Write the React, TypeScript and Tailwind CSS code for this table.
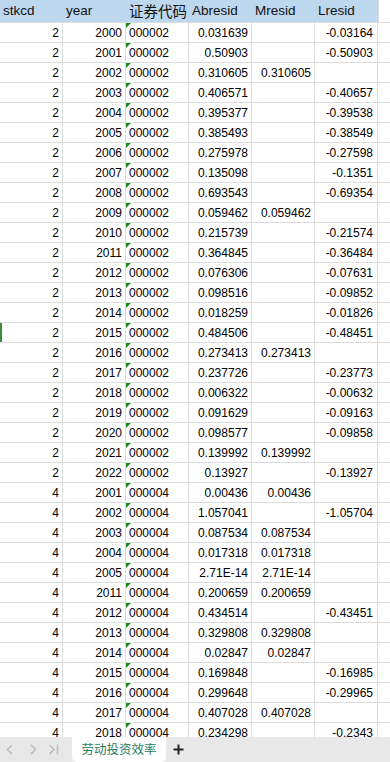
import React from "react";

type Row = {
  stkcd: number;
  year: number;
  code: string;
  ab: string;
  m: string;
  l: string;
};

const raw: [number, number, string, string, string][] = [
  [2, 2000, "0.031639", "", "-0.03164"],
  [2, 2001, "0.50903", "", "-0.50903"],
  [2, 2002, "0.310605", "0.310605", ""],
  [2, 2003, "0.406571", "", "-0.40657"],
  [2, 2004, "0.395377", "", "-0.39538"],
  [2, 2005, "0.385493", "", "-0.38549"],
  [2, 2006, "0.275978", "", "-0.27598"],
  [2, 2007, "0.135098", "", "-0.1351"],
  [2, 2008, "0.693543", "", "-0.69354"],
  [2, 2009, "0.059462", "0.059462", ""],
  [2, 2010, "0.215739", "", "-0.21574"],
  [2, 2011, "0.364845", "", "-0.36484"],
  [2, 2012, "0.076306", "", "-0.07631"],
  [2, 2013, "0.098516", "", "-0.09852"],
  [2, 2014, "0.018259", "", "-0.01826"],
  [2, 2015, "0.484506", "", "-0.48451"],
  [2, 2016, "0.273413", "0.273413", ""],
  [2, 2017, "0.237726", "", "-0.23773"],
  [2, 2018, "0.006322", "", "-0.00632"],
  [2, 2019, "0.091629", "", "-0.09163"],
  [2, 2020, "0.098577", "", "-0.09858"],
  [2, 2021, "0.139992", "0.139992", ""],
  [2, 2022, "0.13927", "", "-0.13927"],
  [4, 2001, "0.00436", "0.00436", ""],
  [4, 2002, "1.057041", "", "-1.05704"],
  [4, 2003, "0.087534", "0.087534", ""],
  [4, 2004, "0.017318", "0.017318", ""],
  [4, 2005, "2.71E-14", "2.71E-14", ""],
  [4, 2011, "0.200659", "0.200659", ""],
  [4, 2012, "0.434514", "", "-0.43451"],
  [4, 2013, "0.329808", "0.329808", ""],
  [4, 2014, "0.02847", "0.02847", ""],
  [4, 2015, "0.169848", "", "-0.16985"],
  [4, 2016, "0.299648", "", "-0.29965"],
  [4, 2017, "0.407028", "0.407028", ""],
  [4, 2018, "0.234298", "", "-0.2343"],
];

const rows: Row[] = raw.map(([stkcd, year, ab, m, l]) => ({
  stkcd,
  year,
  code: stkcd === 2 ? "000002" : "000004",
  ab,
  m,
  l,
}));

const cell = "w-[63px] shrink-0 h-full border-r border-[#dcdcdc] px-[3px] leading-[19px] pt-[1px]";

function HeaderRow() {
  return (
    <div className="flex h-[22px] shrink-0 text-[13.5px] leading-[22px] text-[#111]">
      <div className="flex bg-[#bdd7ee] w-[378px]">
        <div className="w-[63px] pl-[3px]">stkcd</div>
        <div className="w-[63px] pl-[3px]">year</div>
        <div
          className="w-[63px] pl-[3px] text-[14.5px] whitespace-nowrap"
          style={{ fontFamily: '"Noto Sans CJK SC", sans-serif' }}
        >
          证券代码
        </div>
        <div className="w-[63px] pl-[3px]">Abresid</div>
        <div className="w-[63px] pl-[3px]">Mresid</div>
        <div className="w-[63px] pl-[3px]">Lresid</div>
      </div>
      <div className="flex-1 bg-white border-l border-[#dcdcdc]" />
    </div>
  );
}

function DataRow({ r, marked }: { r: Row; marked: boolean }) {
  return (
    <div className="relative flex h-[20px] shrink-0 border-t border-[#dcdcdc] text-[12px] text-black">
      {marked && <div className="absolute left-0 top-0 h-full w-[2px] bg-[#3c8c3c]" />}
      <div className={`${cell} text-right`}>{r.stkcd}</div>
      <div className={`${cell} text-right`}>{r.year}</div>
      <div className={`${cell} relative text-left`}>
        <span className="absolute left-0 top-0 h-0 w-0 border-t-[5px] border-r-[5px] border-t-[#1a8a1a] border-r-transparent" />
        {r.code}
      </div>
      <div className={`${cell} text-right`}>{r.ab}</div>
      <div className={`${cell} text-right`}>{r.m}</div>
      <div className={`${cell} text-right pr-[4px]`}>{r.l}</div>
      <div className="flex-1" />
    </div>
  );
}

function TabBar() {
  return (
    <div className="flex h-[25px] shrink-0 items-stretch bg-[#e8e8e8]">
      <div className="flex w-[72px] items-center pl-[6px] text-[#bdbdbd]">
        <svg width="8" height="11" viewBox="0 0 8 11" className="ml-[0px]">
          <polyline points="6,1 1.5,5.5 6,10" fill="none" stroke="currentColor" strokeWidth="1.6" />
        </svg>
        <svg width="8" height="11" viewBox="0 0 8 11" className="ml-[15px]">
          <polyline points="2,1 6.5,5.5 2,10" fill="none" stroke="currentColor" strokeWidth="1.6" />
        </svg>
        <svg width="11" height="11" viewBox="0 0 11 11" className="ml-[11px]">
          <polyline points="1.5,1 6,5.5 1.5,10" fill="none" stroke="currentColor" strokeWidth="1.6" />
          <line x1="9.5" y1="0.5" x2="9.5" y2="10.5" stroke="currentColor" strokeWidth="1.6" />
        </svg>
      </div>
      <div
        className="flex w-[94px] items-center justify-center rounded-b-[5px] bg-white text-[12.5px] text-[#1f7d5c]"
        style={{ fontFamily: '"Noto Sans CJK SC", sans-serif' }}
      >
        劳动投资效率
      </div>
      <div className="flex items-center pl-[7px]">
        <svg width="11" height="11" viewBox="0 0 11 11">
          <line x1="5.5" y1="0.5" x2="5.5" y2="10.5" stroke="#222" strokeWidth="2" />
          <line x1="0.5" y1="5.5" x2="10.5" y2="5.5" stroke="#222" strokeWidth="2" />
        </svg>
      </div>
    </div>
  );
}

export default function App() {
  return (
    <div
      className="flex h-[762px] w-[390px] flex-col overflow-hidden bg-white"
      style={{ fontFamily: '"Liberation Sans", "Noto Sans CJK SC", sans-serif' }}
    >
      <div className="flex flex-1 flex-col overflow-hidden">
        <HeaderRow />
        {rows.map((r, i) => (
          <DataRow key={i} r={r} marked={i === 15} />
        ))}
      </div>
      <TabBar />
    </div>
  );
}
